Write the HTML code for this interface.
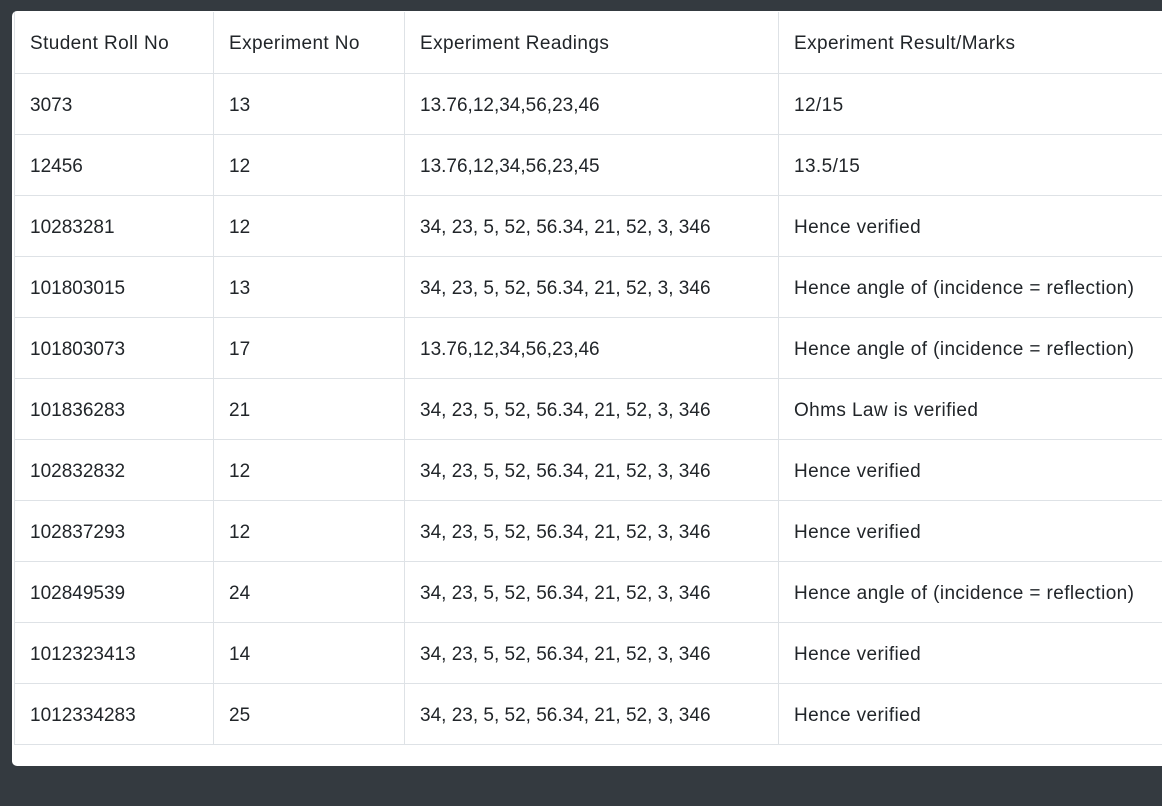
<!DOCTYPE html>
<html><head><style>
body{margin:0;background:#343a40;width:1162px;height:806px;overflow:hidden;font-family:"Liberation Sans",sans-serif;}
.card{position:absolute;left:12px;top:11px;width:1170px;height:755px;background:#fff;border-radius:5px;}
table{position:absolute;left:2px;top:1px;border-collapse:collapse;color:#212529;font-size:19px;table-layout:fixed;}
td{border:1px solid #dee2e6;border-top:none;height:61px;padding:4px 0 0 15px;box-sizing:border-box;vertical-align:middle;white-space:nowrap;overflow:hidden;}
tr:first-child td, td:nth-child(4){letter-spacing:0.4px;}
</style></head><body>
<div class="card"><table style="width:1164px">
<colgroup><col style="width:199px"><col style="width:191px"><col style="width:374px"><col style="width:400px"></colgroup>
<tr><td>Student Roll No</td><td>Experiment No</td><td>Experiment Readings</td><td>Experiment Result/Marks</td></tr>
<tr><td>3073</td><td>13</td><td>13.76,12,34,56,23,46</td><td>12/15</td></tr>
<tr><td>12456</td><td>12</td><td>13.76,12,34,56,23,45</td><td>13.5/15</td></tr>
<tr><td>10283281</td><td>12</td><td>34, 23, 5, 52, 56.34, 21, 52, 3, 346</td><td>Hence verified</td></tr>
<tr><td>101803015</td><td>13</td><td>34, 23, 5, 52, 56.34, 21, 52, 3, 346</td><td>Hence angle of (incidence = reflection)</td></tr>
<tr><td>101803073</td><td>17</td><td>13.76,12,34,56,23,46</td><td>Hence angle of (incidence = reflection)</td></tr>
<tr><td>101836283</td><td>21</td><td>34, 23, 5, 52, 56.34, 21, 52, 3, 346</td><td>Ohms Law is verified</td></tr>
<tr><td>102832832</td><td>12</td><td>34, 23, 5, 52, 56.34, 21, 52, 3, 346</td><td>Hence verified</td></tr>
<tr><td>102837293</td><td>12</td><td>34, 23, 5, 52, 56.34, 21, 52, 3, 346</td><td>Hence verified</td></tr>
<tr><td>102849539</td><td>24</td><td>34, 23, 5, 52, 56.34, 21, 52, 3, 346</td><td>Hence angle of (incidence = reflection)</td></tr>
<tr><td>1012323413</td><td>14</td><td>34, 23, 5, 52, 56.34, 21, 52, 3, 346</td><td>Hence verified</td></tr>
<tr><td>1012334283</td><td>25</td><td>34, 23, 5, 52, 56.34, 21, 52, 3, 346</td><td>Hence verified</td></tr>
</table></div>
</body></html>
